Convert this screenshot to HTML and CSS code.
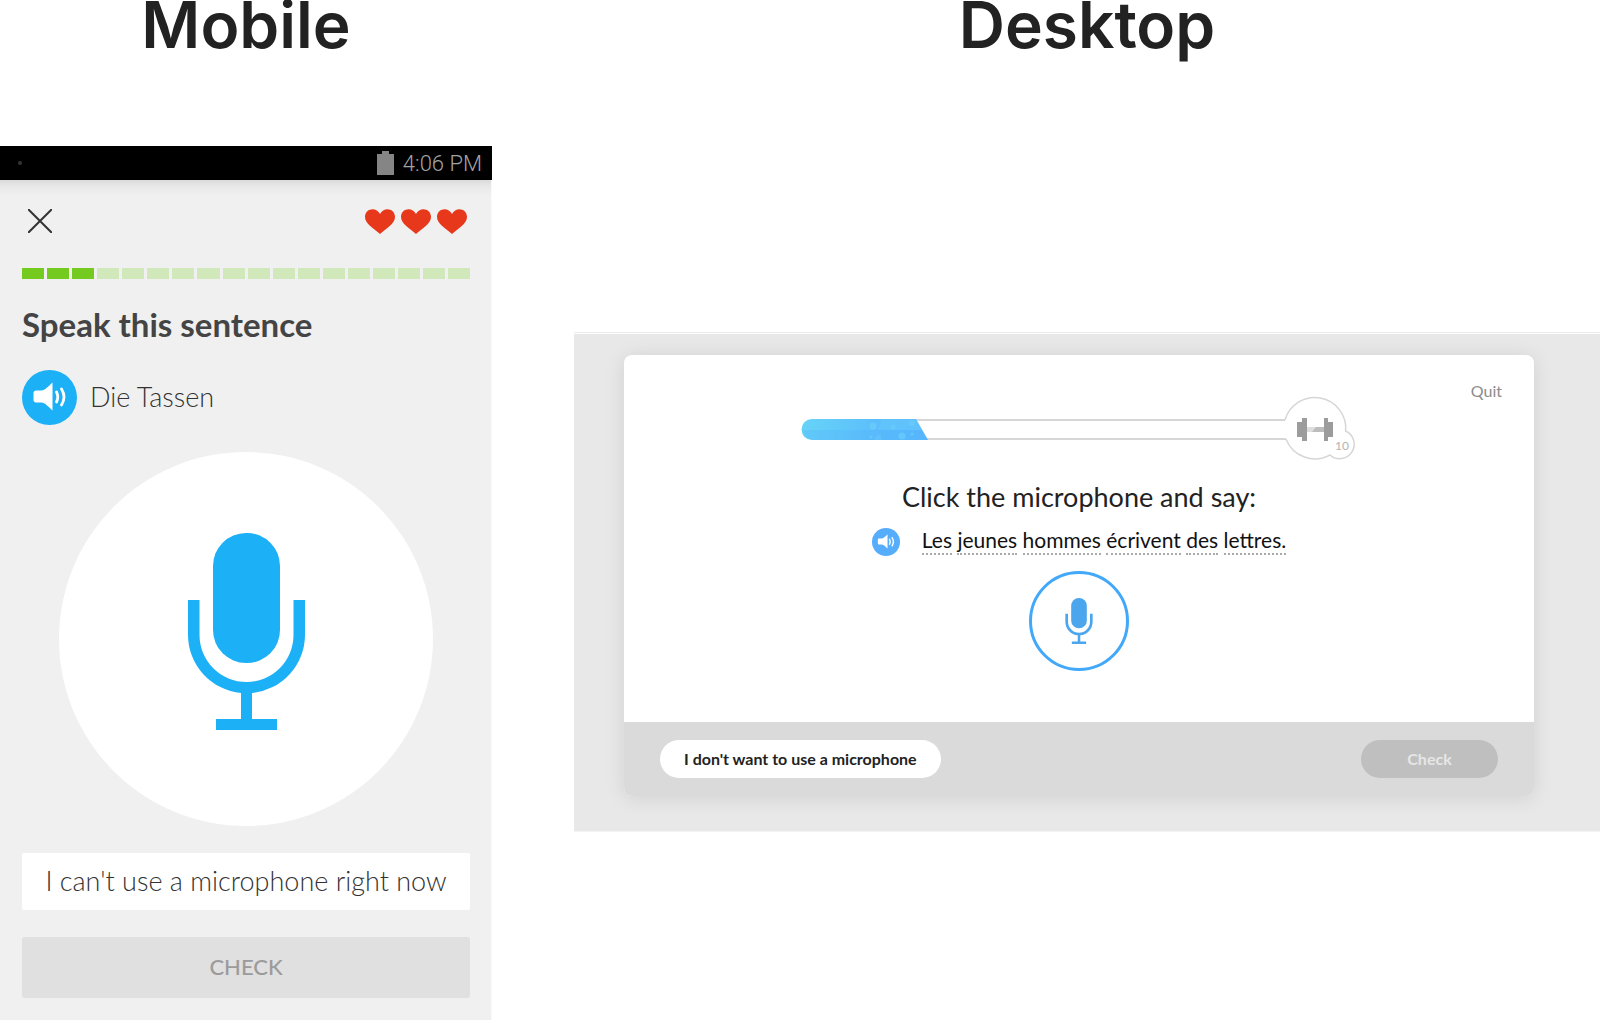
FILE: index.html
```html
<!DOCTYPE html>
<html lang="en">
	<head>
		<meta charset="UTF-8">
		<meta name="viewport" content="width=device-width, initial-scale=1">
		<title>Speaking exercise</title>
		<link rel="stylesheet" href="styles.css">
	</head>
	<body>
		<!-- shared icons -->
		<svg class="sprite" aria-hidden="true">
			<symbol id="mic" viewBox="0 0 117 197">
				<rect class="mic-head" x="25" y="0" width="67" height="130" rx="33"/>
				<path class="mic-stand" d="M0 67h11.500v35a47 47 0 0 0 94 0V67H117v35a58.500 58.500 0 0 1-53 58v26h25v11H28v-11h25v-26A58.500 58.500 0 0 1 0 102z"/>
			</symbol>
			<symbol id="speaker" viewBox="0 0 55 55">
				<path fill="#fff" d="M14 20.500h5.500c3 0 7.500-4.500 11-8v28c-3.500-3.500-8-8-11-8H14c-1.500 0-2.500-1-2.500-2.500v-7c0-1.500 1-2.500 2.500-2.500z"/>
				<path fill="none" stroke="#fff" stroke-width="2.800" stroke-linecap="round" d="M34.500 22q2.500 5 0 10M39.500 19q5 8 0 16"/>
			</symbol>
			<symbol id="heart" viewBox="0 0 30 25">
				<path fill="#e8381b" d="M15 25C9 19.500 0 15 0 8c0-9 11.500-10.500 15-3 3.500-7.500 15-6 15 3 0 7-9 11.500-15 17z"/>
			</symbol>
		</svg>

		<main class="compare">
			<section class="mobile">
				<h1 class="platform">Mobile</h1>
				<div class="statusbar">
					<span class="notification"></span>
					<svg class="battery" viewBox="0 0 17 24" aria-hidden="true"><path fill="#858585" d="M5 0h7v3h5v21H0V3h5z"/></svg>
					<span>4:06 PM</span>
				</div>
				<div class="phone">
					<div class="topbar">
						<button class="close" type="button" aria-label="Close">
							<svg viewBox="0 0 24 24"><path d="M0 0l24 24M24 0L0 24" stroke="#333" stroke-width="2"/></svg>
						</button>
						<div class="hearts">
							<svg><use href="#heart"/></svg>
							<svg><use href="#heart"/></svg>
							<svg><use href="#heart"/></svg>
						</div>
					</div>
					<div class="steps">
						<i class="done"></i><i class="done"></i><i class="done"></i><i></i><i></i><i></i>
						<i></i><i></i><i></i><i></i><i></i><i></i>
						<i></i><i></i><i></i><i></i><i></i><i></i>
					</div>
					<h2 class="task">Speak this sentence</h2>
					<div class="phrase">
						<button class="listen" type="button" aria-label="Listen"><svg><use href="#speaker"/></svg></button>
						<span>Die Tassen</span>
					</div>
					<button class="record" type="button" aria-label="Record"><svg><use href="#mic"/></svg></button>
					<button class="skip" type="button">I can't use a microphone right now</button>
					<button class="submit" type="button" disabled>CHECK</button>
				</div>
			</section>

			<section class="desktop">
				<h1 class="platform">Desktop</h1>
				<div class="panel">
					<div class="card">
						<div class="lesson">
							<a class="quit" href="#">Quit</a>
							<svg class="progress" viewBox="0 0 554 64" role="img" aria-label="Lesson progress">
								<defs>
									<linearGradient id="fill" x1="0" y1="0" x2="1" y2="0">
										<stop offset="0" stop-color="#67d3f7"/>
										<stop offset=".6" stop-color="#5cbefc"/>
										<stop offset="1" stop-color="#59b9ff"/>
									</linearGradient>
								</defs>
								<path stroke="#d6d6d6" stroke-width="2" d="M10 23H483M10 42H484"/>
								<path fill="none" stroke="#d6d6d6" stroke-width="1.500" d="M483 23A31 31 0 0 1 543.700 34A14.500 14.500 0 1 1 528 58A31 31 0 0 1 484 42"/>
								<path fill="url(#fill)" d="M10 22h104l12 21H10a10.500 10.500 0 0 1 0-21z"/>
								<path fill="#4eacfa" opacity=".25" d="M1 33h119l6 10H10q-8-1-9-10z"/>
								<g fill="#72d6fa" opacity=".5">
									<circle cx="71" cy="29" r="3.500"/>
									<circle cx="91" cy="30" r="2.500"/>
									<circle cx="110" cy="26" r="3"/>
									<circle cx="100" cy="39" r="3.500"/>
									<circle cx="110" cy="37" r="1.500"/>
									<circle cx="69" cy="40" r="1.500"/>
									<path d="M79 22h35l6 11H76q3-5 3-11zM73 43q0-6 6-6v6z" opacity=".5"/>
								</g>
								<path fill="#dedede" d="M504 30h18v5h-18z"/>
								<path fill="#bdbdbd" d="M514 30h8v5h-12z"/>
								<path fill="#9c9c9c" d="M495 25h5v-4h5v23h-5v-4h-5zM522 21h4v4h5v15h-5v4h-4z"/>
								<text class="weight" x="533" y="53">10</text>
							</svg>
							<h2 class="question">Click the microphone and say:</h2>
							<div class="sentence">
								<button class="listen small" type="button" aria-label="Listen"><svg><use href="#speaker"/></svg></button>
								<p><span>Les</span> <span>jeunes</span> <span>hommes</span> <span>écrivent</span> <span>des</span> <span>lettres.</span></p>
							</div>
							<button class="talk" type="button" aria-label="Record"><svg><use href="#mic"/></svg></button>
						</div>
						<div class="actions">
							<button class="pill" type="button">I don't want to use a microphone</button>
							<button class="pill check" type="button" disabled>Check</button>
						</div>
					</div>
				</div>
			</section>
		</main>
	</body>
</html>
```
FILE: styles.css
```css
* {
	box-sizing: border-box;
}
body {
	margin: 0;
	background: #fff;
	color: #222;
	font-family: Lato, "Open Sans", sans-serif;
}
button {
	border: 0;
	padding: 0;
	font-family: inherit;
	cursor: pointer;
}
svg {
	display: block;
}
.sprite {
	position: absolute;
	width: 0;
	height: 0;
}
.compare {
	display: flex;
	gap: 82px;
}
.platform {
	margin: 0;
	color: #222;
	font-family: Inter, sans-serif;
	font-size: 64px;
	line-height: 50px;
	font-weight: 600;
	text-align: center;
}

/* phone */
.mobile {
	flex: 0 0 492px;
}
.statusbar {
	display: flex;
	align-items: center;
	height: 34px;
	margin-top: 96px;
	padding: 0 10px 0 18px;
	background: #000;
	color: #a3a3a3;
	font-family: Roboto, sans-serif;
	font-size: 22px;
	font-weight: 300;
}
.notification {
	width: 4px;
	height: 4px;
	margin-right: auto;
	border-radius: 50%;
	background: #333;
}
.battery {
	width: 17px;
	height: 24px;
	margin-right: 9px;
}
.phone {
	padding: 28px 21px 22px 22px;
	border-right: 1px solid #fafafa;
	background: linear-gradient(#d9d9d9, #e8e8e8 6px, #f0f0f0 16px);
}
.topbar {
	display: flex;
	justify-content: space-between;
	align-items: center;
	height: 26px;
	padding: 0 3px 0 6px;
}
.close {
	background: none;
}
.close svg {
	width: 24px;
	height: 24px;
}
.hearts {
	display: flex;
	gap: 6px;
}
.hearts svg {
	width: 30px;
	height: 25px;
}
.steps {
	display: flex;
	gap: 3px;
	height: 11px;
	margin-top: 34px;
}
.steps i {
	flex: 1;
	background: #d1e8bb;
}
.steps .done {
	background: #75ca20;
}
.task {
	margin: 25px 0 26px;
	color: #444;
	font-size: 33px;
	line-height: 40px;
	font-weight: 700;
}
.phrase {
	display: flex;
	align-items: center;
	gap: 13px;
	color: #333;
	font-size: 27px;
	line-height: 32px;
	font-weight: 300;
}
.phrase span {
	padding-bottom: 2px;
}
.listen {
	flex: none;
	width: 55px;
	height: 55px;
	border-radius: 50%;
	background: #1cb0f6;
}
.listen svg {
	width: 100%;
	height: 100%;
}
.record {
	display: flex;
	justify-content: center;
	align-items: center;
	width: 374px;
	height: 374px;
	margin: 27px auto;
	padding-bottom: 16px;
	border-radius: 50%;
	background: #fff;
	fill: #1cb0f6;
}
.record svg {
	width: 117px;
	height: 197px;
}
.skip,
.submit {
	display: block;
	width: 100%;
	height: 57px;
	padding-bottom: 2px;
	border-radius: 2px;
	background: #fff;
	color: #333;
	font-size: 27px;
	font-weight: 300;
}
.submit {
	height: 61px;
	margin-top: 27px;
	border-radius: 3px;
	background: #e0e0e0;
	color: #9b9b9b;
	font-size: 22px;
	font-weight: 500;
}

/* desktop */
.desktop {
	flex: 1;
	min-width: 0;
}
.panel {
	margin-top: 282px;
	padding: 22px 66px 35px 50px;
	border-top: 1px solid #ececec;
	border-bottom: 1px solid #f4f4f4;
	background: #e8e8e8;
	box-shadow: inset 0 1px #fff;
}
.card {
	border-radius: 8px;
	overflow: hidden;
	background: #fff;
	box-shadow: 0 2px 20px rgba(0, 0, 0, .1);
}
.lesson {
	display: flex;
	flex-direction: column;
	align-items: center;
	padding: 26px 32px 51px;
}
.quit {
	align-self: flex-end;
	height: 16px;
	color: #8c8c8c;
	font-size: 16px;
	line-height: 20px;
	text-decoration: none;
}
.progress {
	width: 554px;
	max-width: 100%;
	overflow: visible;
}
.weight {
	fill: #b3b3b3;
	font-size: 12px;
}
.question {
	margin: 19px 0 14px;
	color: #222;
	font-size: 27px;
	line-height: 34px;
	font-weight: 400;
}
.sentence {
	display: flex;
	align-items: center;
	gap: 22px;
	color: #111;
	font-size: 21px;
}
.listen.small {
	width: 28px;
	height: 28px;
	background: #56adfb;
}
.sentence p {
	margin: 0;
	padding-bottom: 4px;
	line-height: 24px;
}
.sentence span {
	padding-bottom: 1px;
	border-bottom: 2px dotted #aaa;
}
.talk {
	display: flex;
	justify-content: center;
	align-items: center;
	width: 100px;
	height: 100px;
	margin-top: 15px;
	border: 3px solid #42a8f9;
	border-radius: 50%;
	background: #fff;
	fill: #4ca6ee;
}
.talk svg {
	width: 28px;
	height: 46px;
}
.actions {
	display: flex;
	justify-content: space-between;
	padding: 18px 36px;
	background: #dadada;
}
.pill {
	height: 38px;
	padding: 0 24px 2px;
	border-radius: 20px;
	background: #fff;
	color: #222;
	font-size: 16px;
	font-weight: 700;
}
.pill.check {
	min-width: 137px;
	background: #bfbfbf;
	color: #e6e6e6;
}
```
